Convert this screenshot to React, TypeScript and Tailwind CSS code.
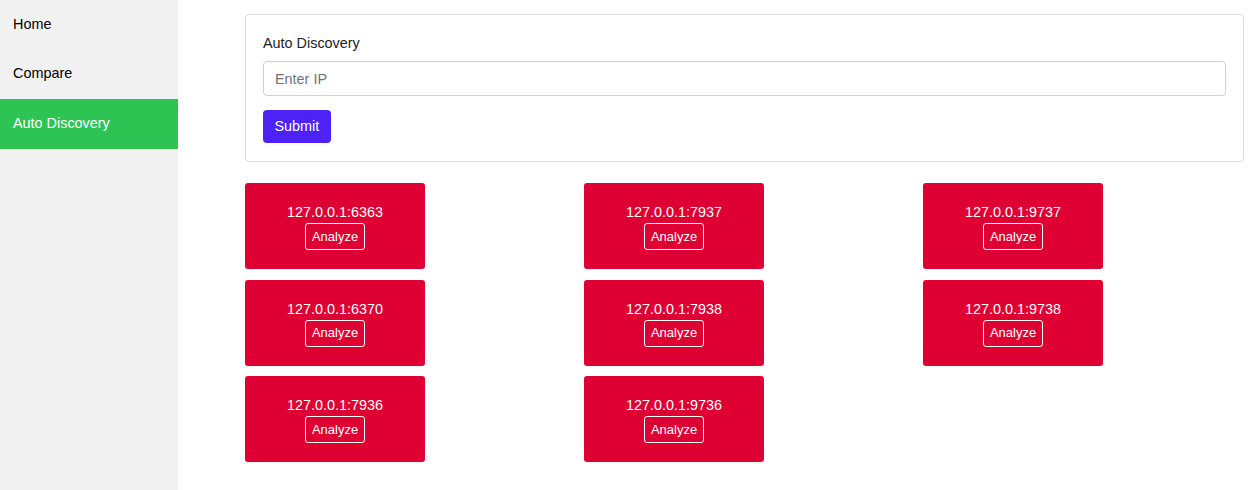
import React from 'react';

const hosts = [
  '127.0.0.1:6363',
  '127.0.0.1:7937',
  '127.0.0.1:9737',
  '127.0.0.1:6370',
  '127.0.0.1:7938',
  '127.0.0.1:9738',
  '127.0.0.1:7936',
  '127.0.0.1:9736',
];

const navItems = ['Home', 'Compare', 'Auto Discovery'];

export default function App() {
  return (
    <div className="flex min-h-[490px] font-['Liberation_Sans',Arial,sans-serif] text-[14.4px] text-[#1a1a1a]">
      {/* Sidebar */}
      <aside className="w-[178px] shrink-0 bg-[#f1f1f1]">
        {navItems.map((item) => (
          <div
            key={item}
            className={`h-[49.5px] flex items-center pl-[13px] ${
              item === 'Auto Discovery' ? 'bg-[#2ec454] text-white' : 'text-black'
            }`}
          >
            {item}
          </div>
        ))}
      </aside>

      {/* Main */}
      <main className="flex-1 min-w-0 pl-[67px] pr-[15px] pt-[14px]">
        <div className="border border-[#dcdcdc] rounded-[4px] px-[17px] pt-[19px] pb-[18px]">
          <div className="text-[14.4px] leading-[18px] text-[#222] mb-[9px]">Auto Discovery</div>
          <input
            placeholder="Enter IP"
            className="w-full h-[35px] border border-[#cfd0d4] rounded-[4px] px-[11px] text-[14.4px] placeholder:text-[#6c727a] outline-none"
          />
          <button className="mt-[14px] h-[33px] px-[11.5px] rounded-[4px] bg-[#4c22f6] text-white text-[14.4px]">
            Submit
          </button>
        </div>

        <div className="mt-[21px] grid grid-cols-[repeat(3,339px)] gap-y-[10.5px]">
          {hosts.map((h) => (
            <div
              key={h}
              className="w-[180px] h-[86px] bg-[#df0033] rounded-[3px] flex flex-col items-center justify-center text-white"
            >
              <div className="text-[14.4px] leading-[18px] pt-[1px]">{h}</div>
              <button className="mt-[2px] h-[27px] px-[6px] border border-white rounded-[3px] text-[13px] text-white">
                Analyze
              </button>
            </div>
          ))}
        </div>
      </main>
    </div>
  );
}
